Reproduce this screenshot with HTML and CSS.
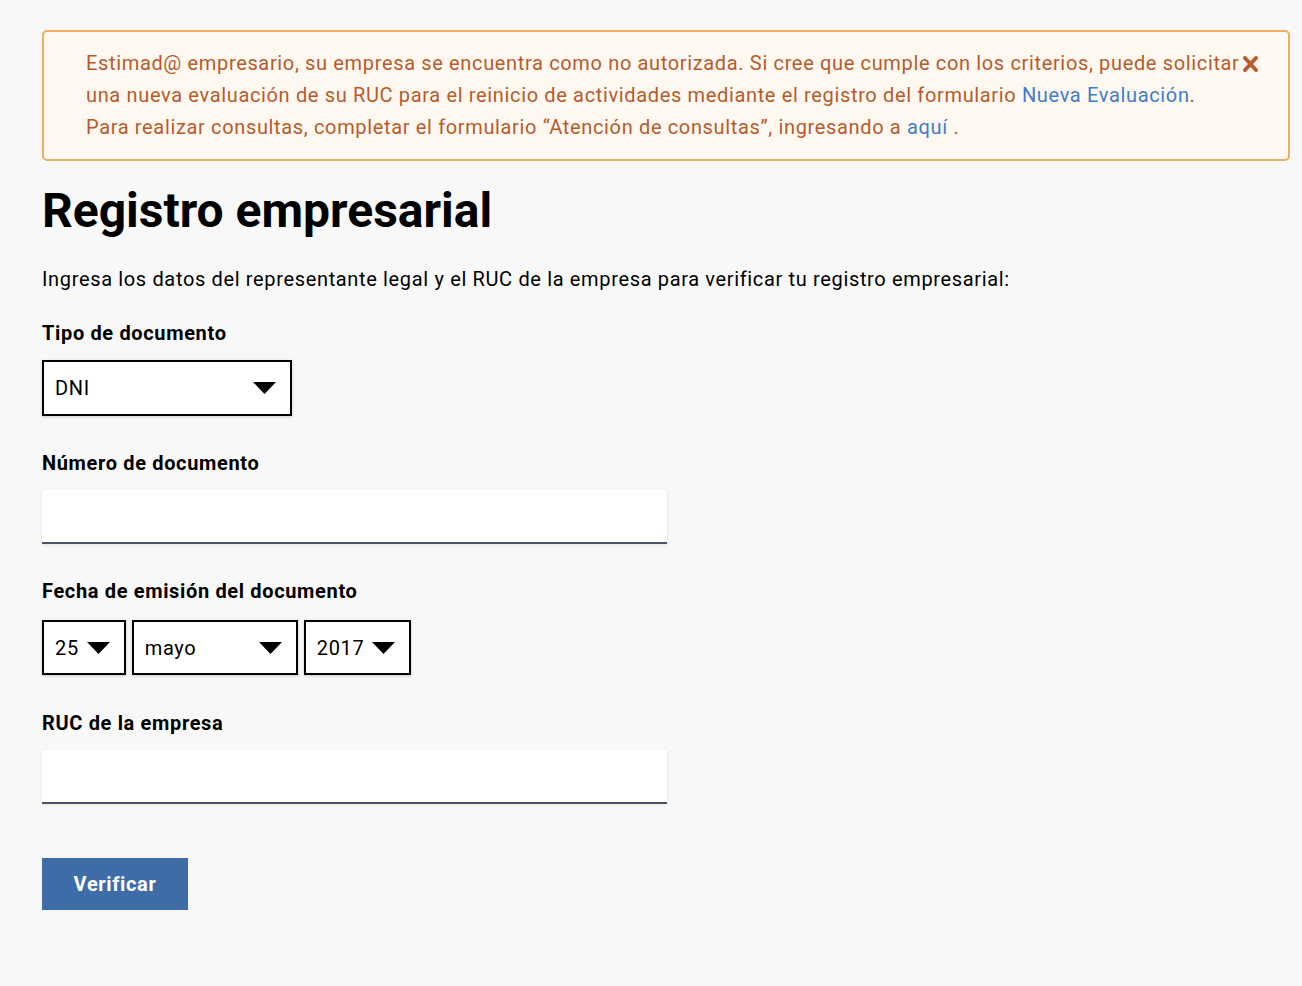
FILE: index.html
```html
<!DOCTYPE html>
<html lang="es">
<head>
<meta charset="utf-8">
<title>Registro empresarial</title>
<link rel="stylesheet" href="styles.css">
</head>
<body>
<main class="page">
  <div class="alert" role="alert">
    <p class="alert-text">Estimad@ empresario, su empresa se encuentra como no autorizada. Si cree que cumple con los criterios, puede solicitar<br>una nueva evaluación de su RUC para el reinicio de actividades mediante el registro del formulario <a href="#" class="alert-link">Nueva Evaluación</a>.<br>Para realizar consultas, completar el formulario “Atención de consultas”, ingresando a <a href="#" class="alert-link">aquí</a> .</p>
    <button class="alert-close" type="button" aria-label="Cerrar">
      <svg width="15" height="16" viewBox="0 0 15 16"><path d="M2 2 L13 14 M13 2 L2 14" stroke="currentColor" stroke-width="3.8" stroke-linecap="round"/></svg>
    </button>
  </div>

  <h1 class="title">Registro empresarial</h1>
  <p class="intro">Ingresa los datos del representante legal y el RUC de la empresa para verificar tu registro empresarial:</p>

  <form class="form">
    <div class="field field-first">
      <label class="label">Tipo de documento</label>
      <div class="select select-doc">
        <span class="select-value">DNI</span>
        <svg class="caret" width="23" height="12" viewBox="0 0 23 12"><polygon points="0,0 23,0 11.5,12" fill="#000"/></svg>
      </div>
    </div>

    <div class="field">
      <label class="label">Número de documento</label>
      <input class="text-input" type="text">
    </div>

    <div class="field">
      <label class="label label-date">Fecha de emisión del documento</label>
      <div class="date-row">
        <div class="select select-date">
          <span class="select-value">25</span>
          <svg class="caret" width="23" height="12" viewBox="0 0 23 12"><polygon points="0,0 23,0 11.5,12" fill="#000"/></svg>
        </div>
        <div class="select select-date select-month">
          <span class="select-value">mayo</span>
          <svg class="caret" width="23" height="12" viewBox="0 0 23 12"><polygon points="0,0 23,0 11.5,12" fill="#000"/></svg>
        </div>
        <div class="select select-date">
          <span class="select-value">2017</span>
          <svg class="caret" width="23" height="12" viewBox="0 0 23 12"><polygon points="0,0 23,0 11.5,12" fill="#000"/></svg>
        </div>
      </div>
    </div>

    <div class="field field-after-date">
      <label class="label">RUC de la empresa</label>
      <input class="text-input" type="text">
    </div>

    <button class="btn-primary" type="button">Verificar</button>
  </form>
</main>
</body>
</html>
```

FILE: styles.css
```css
* { box-sizing: border-box; }

html, body {
  margin: 0;
  padding: 0;
  background: #f8f8f8;
}

body {
  font-family: Roboto, "Liberation Sans", Arial, sans-serif;
  color: #000;
  letter-spacing: 0.65px;
}

.page {
  padding: 30px 12px 40px 42px;
}

.alert {
  position: relative;
  background: #fef8f1;
  border: 2px solid #f0ae62;
  border-radius: 5px;
  padding: 15px 48px 16px 42px;
}

.alert-text {
  margin: 0;
  font-size: 20px;
  line-height: 32px;
  color: #b75b2b;
  white-space: nowrap;
}

.alert-link {
  color: #3f7dc9;
  text-decoration: none;
}

.alert-close {
  position: absolute;
  top: 24px;
  right: 30px;
  width: 15px;
  height: 16px;
  padding: 0;
  border: 0;
  background: none;
  color: #b75b2b;
  display: flex;
}

.title {
  margin: 22px 0 0;
  font-size: 48px;
  line-height: 56px;
  font-weight: 700;
  letter-spacing: 0;
}

.intro {
  margin: 28px 0 0;
  font-size: 20px;
  line-height: 24px;
}

.form {
  display: flex;
  flex-direction: column;
  align-items: flex-start;
}

.field {
  display: flex;
  flex-direction: column;
  align-items: flex-start;
  margin-top: 35px;
}

.field-first {
  margin-top: 30px;
}

.field-after-date {
  margin-top: 36px;
}

.label {
  font-size: 20px;
  line-height: 24px;
  font-weight: 700;
  margin-bottom: 15px;
}

.label-date {
  margin-bottom: 17px;
}

.select {
  height: 56px;
  display: flex;
  align-items: center;
  justify-content: space-between;
  gap: 8px;
  padding: 0 14px 0 11px;
  border: 2px solid #000;
  background: #fff;
  box-shadow: 0 1px 3px rgba(0, 0, 0, 0.18);
  font-size: 20px;
}

.select-date {
  height: 55px;
}

.select-doc {
  width: 250px;
}

.select-month {
  width: 166px;
}

.caret {
  display: block;
  flex: none;
}

.date-row {
  display: flex;
  gap: 6px;
}

.text-input {
  width: 625px;
  height: 54px;
  border: 0;
  border-bottom: 2px solid #4b5568;
  background: #fff;
  box-shadow: 0 1px 4px rgba(0, 0, 0, 0.08);
  font-family: inherit;
  font-size: 20px;
  padding: 0 12px;
  outline: none;
}

.btn-primary {
  margin-top: 54px;
  width: 146px;
  height: 52px;
  border: 0;
  background: #3d6ca9;
  color: #fff;
  font-family: inherit;
  font-size: 20px;
  font-weight: 700;
  letter-spacing: 0.65px;
  cursor: pointer;
}
```
